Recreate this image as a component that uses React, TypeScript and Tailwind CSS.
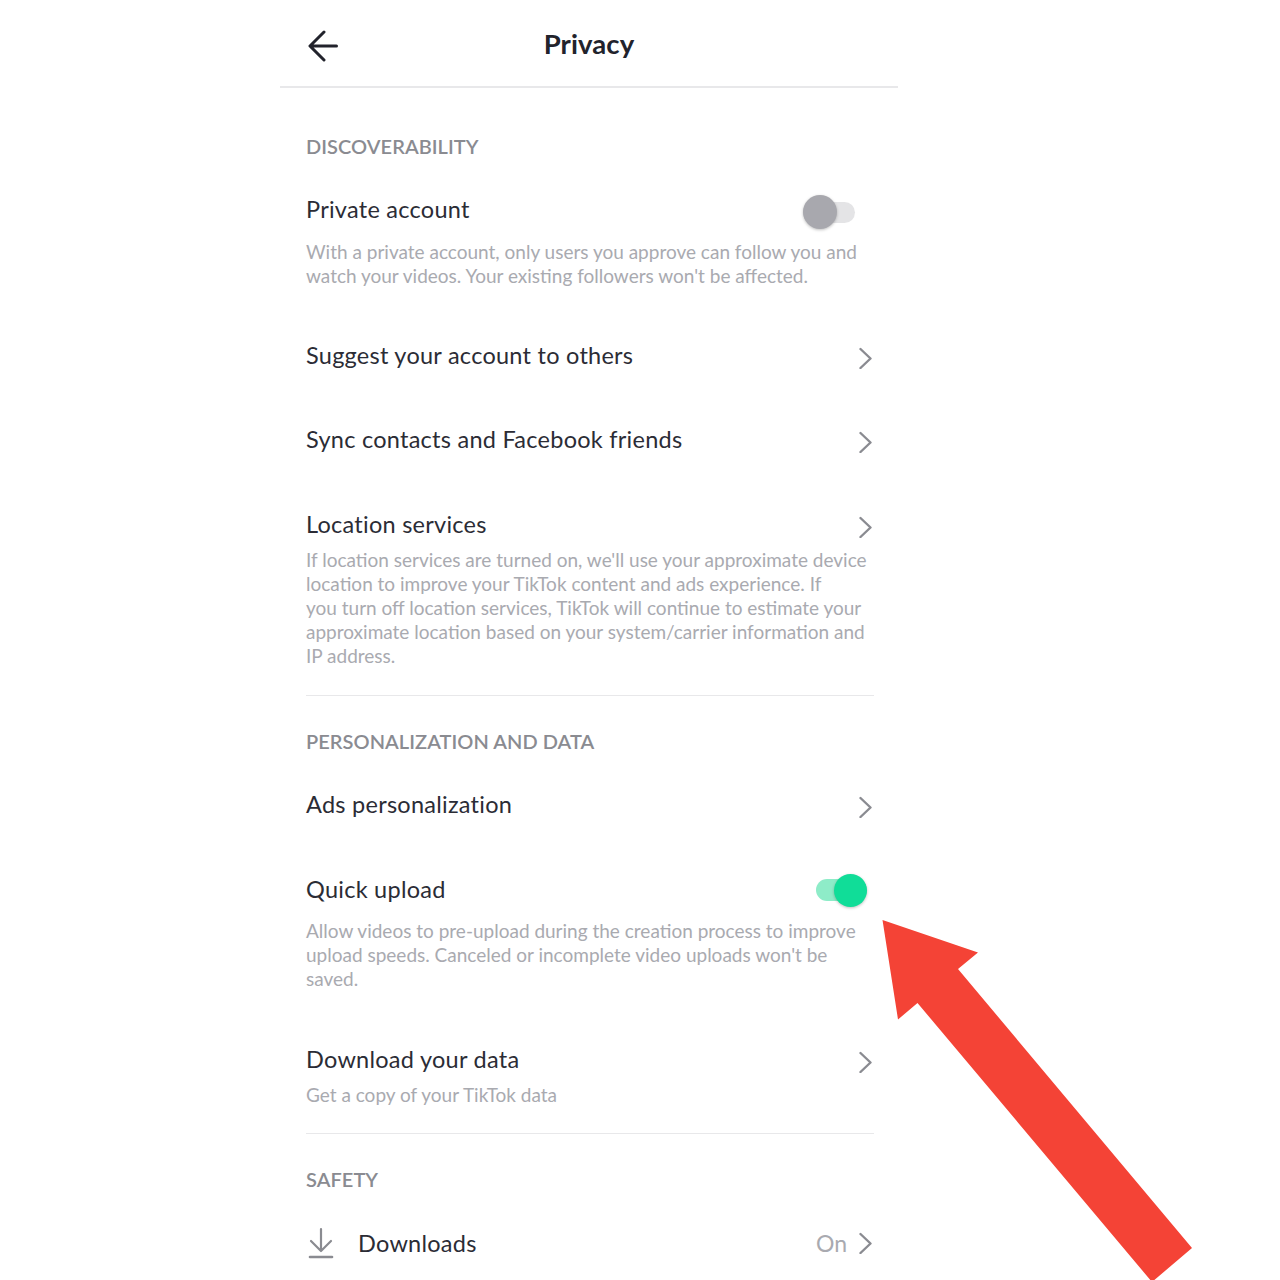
import React from 'react';

function Chevron() {
  return (
    <svg width="13" height="22" viewBox="0 0 13 22" fill="none" className="shrink-0">
      <path d="M1.5 2l10 9.5-10 9.5" stroke="#8a8b91" strokeWidth="2.4" strokeLinecap="round" strokeLinejoin="round" />
    </svg>
  );
}

function Section({ children }: { children: React.ReactNode }) {
  return <div className="text-[20px] leading-[24px] font-semibold text-[#8a8b91] tracking-[0.05px]">{children}</div>;
}

function Title({ children }: { children: React.ReactNode }) {
  return <div className="text-[23.5px] leading-[28px] text-[#2b2c35] tracking-[0.26px]">{children}</div>;
}

function Desc({ children }: { children: React.ReactNode }) {
  return <div className="text-[19px] leading-[24px] text-[#a9aab0]">{children}</div>;
}

function LinkRow({ title }: { title: string }) {
  return (
    <div className="flex items-center justify-between h-[28px]">
      <Title>{title}</Title>
      <div className="mt-[6px] mr-[2px]"><Chevron /></div>
    </div>
  );
}

export default function App() {
  return (
    <div className="relative w-[1280px] h-[1280px] overflow-hidden bg-white font-['Lato',sans-serif]">
      <div className="ml-[280px] w-[618px]">
        <header className="relative flex items-center justify-center h-[88px] border-b-2 border-[#e8e8ea]">
          <svg width="32" height="32" viewBox="0 0 32 32" fill="none" className="absolute left-[28px] top-[30px]">
            <path d="M28.5 16H2.5M16 2L2 16l14 14" stroke="#22232c" strokeWidth="3" strokeLinecap="round" strokeLinejoin="round" />
          </svg>
          <h1 className="text-[27.5px] font-bold text-[#22232c] mt-[2px] tracking-[0.1px]">Privacy</h1>
        </header>

        <div className="pl-[26px] pr-[24px]">
          <div className="pt-[46px]"><Section>DISCOVERABILITY</Section></div>

          <div className="pt-[37px]">
            <div className="flex items-center justify-between h-[28px]">
              <Title>Private account</Title>
              <div className="relative w-[52px] h-[34px] mr-[19px] mt-[6px] flex items-center">
                <div className="w-full h-[21px] rounded-full bg-[#e4e4e6]" />
                <div className="absolute left-0 top-0 w-[34px] h-[34px] rounded-full bg-[#a8a8ae] shadow-[0_1px_3px_rgba(0,0,0,0.25)]" />
              </div>
            </div>
            <div className="pt-[17px]">
              <Desc>With a private account, only users you approve can follow you and<br />watch your videos. Your existing followers won't be affected.</Desc>
            </div>
          </div>

          <div className="pt-[53px]"><LinkRow title="Suggest your account to others" /></div>
          <div className="pt-[56px]"><LinkRow title="Sync contacts and Facebook friends" /></div>
          <div className="pt-[57px]"><LinkRow title="Location services" /></div>
          <div className="pt-[10px]">
            <Desc>
              If location services are turned on, we'll use your approximate device<br />
              location to improve your TikTok content and ads experience. If<br />
              you turn off location services, TikTok will continue to estimate your<br />
              approximate location based on your system/carrier information and<br />
              IP address.
            </Desc>
          </div>

          <div className="mt-[27px] border-t border-[#e8e8ea]" />

          <div className="pt-[33px]"><Section>PERSONALIZATION AND DATA</Section></div>
          <div className="pt-[37px]"><LinkRow title="Ads personalization" /></div>

          <div className="pt-[57px]">
            <div className="flex items-center justify-between h-[28px]">
              <Title>Quick upload</Title>
              <div className="relative w-[51px] h-[33px] mr-[7px] mt-[2px] flex items-center">
                <div className="w-full h-[22px] rounded-full bg-[#8eecc8]" />
                <div className="absolute right-0 top-0 w-[33px] h-[33px] rounded-full bg-[#10dd98] shadow-[0_1px_3px_rgba(0,0,0,0.25)]" />
              </div>
            </div>
            <div className="pt-[16px]">
              <Desc>
                Allow videos to pre-upload during the creation process to improve<br />
                upload speeds. Canceled or incomplete video uploads won't be<br />
                saved.
              </Desc>
            </div>
          </div>

          <div className="pt-[54px]"><LinkRow title="Download your data" /></div>
          <div className="pt-[10px]"><Desc>Get a copy of your TikTok data</Desc></div>

          <div className="mt-[26px] border-t border-[#e8e8ea]" />

          <div className="pt-[33px]"><Section>SAFETY</Section></div>

          <div className="mt-[38px] flex items-center justify-between h-[28px]">
            <div className="flex items-center">
              <svg width="28" height="32" viewBox="0 0 28 32" fill="none" className="mr-[23px] ml-px">
                <path d="M14 2v21M4 14l10 10 10-10" stroke="#8a8b91" strokeWidth="2.2" strokeLinecap="round" strokeLinejoin="round" />
                <path d="M3 30h22" stroke="#8a8b91" strokeWidth="2.6" strokeLinecap="round" />
              </svg>
              <Title>Downloads</Title>
            </div>
            <div className="flex items-center gap-[12px] mr-[2px]">
              <span className="text-[23px] text-[#a9aab0]">On</span>
              <Chevron />
            </div>
          </div>
        </div>
      </div>

      <svg width="1280" height="1280" viewBox="0 0 1280 1280" className="absolute inset-0 pointer-events-none">
        <path d="M882.5 920L978 952.5 958 969 1192 1248 1152 1282 917.5 1003 898 1019.5Z" fill="#f44336" />
      </svg>
    </div>
  );
}
